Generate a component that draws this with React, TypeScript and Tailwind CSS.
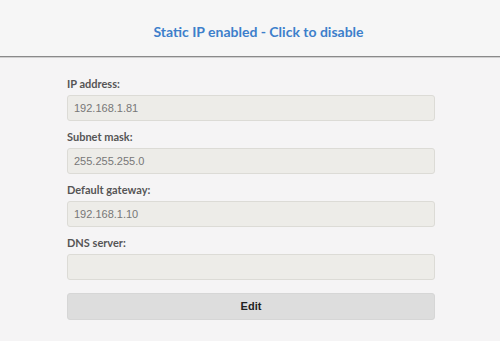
import React from "react";

const fields = [
  { label: "IP address:", value: "192.168.1.81" },
  { label: "Subnet mask:", value: "255.255.255.0" },
  { label: "Default gateway:", value: "192.168.1.10" },
  { label: "DNS server:", value: "" },
];

export default function App() {
  return (
    <div className="w-[500px] h-[341px] bg-[#f5f4f5] overflow-hidden" style={{ fontFamily: "'Liberation Sans', Arial, sans-serif" }}>
      <div className="h-[56px] flex items-center justify-center pt-[6px] pl-[17px] bg-[#f6f6f6]">
        <span className="text-[14px] font-bold text-[#3d7fcb]" style={{ fontFamily: "Lato, sans-serif" }}>
          Static IP enabled - Click to disable
        </span>
      </div>
      <div className="h-px bg-[#8a8a8a]" />
      <div className="h-px bg-[#d0d0d0]" />
      <div className="pl-[67px] pt-[18px]">
        <div className="w-[368px] flex flex-col">
          {fields.map((f) => (
            <div key={f.label} className="flex flex-col mb-[8px]">
              <div className="h-[15px] leading-[15px] text-[11px] font-bold text-[#555]" style={{ fontFamily: "Lato, sans-serif" }}>
                {f.label}
              </div>
              <div className="mt-[4px] h-[26px] rounded-[3px] border border-[#dcdbd6] bg-[#edece8] flex items-center pl-[6px] text-[11px] text-[#777]">
                {f.value}
              </div>
            </div>
          ))}
          <div className="mt-[5px] h-[27px] rounded-[3px] bg-[#dddddd] border border-[#d6d6d6] flex items-center justify-center text-[11px] font-bold text-[#222]">
            Edit
          </div>
        </div>
      </div>
    </div>
  );
}
